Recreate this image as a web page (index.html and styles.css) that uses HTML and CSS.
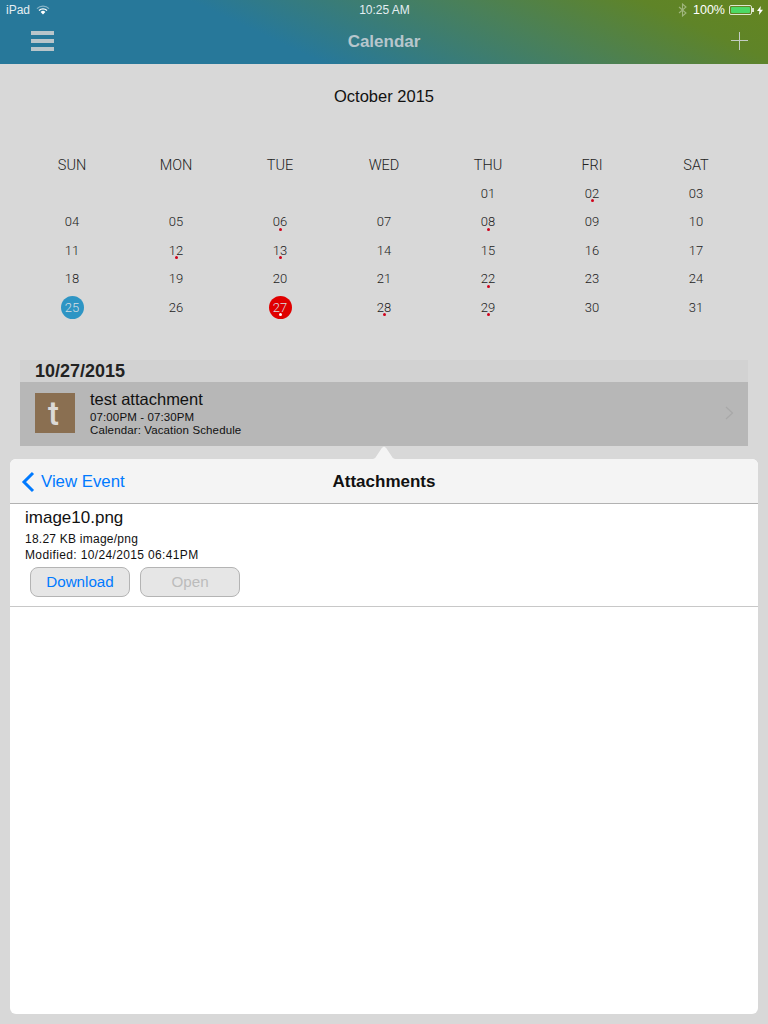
FILE: index.html
```html
<!DOCTYPE html>
<html lang="en">
<head>
    <meta charset="UTF-8">
    <title>Calendar</title>
    <link rel="stylesheet" href="styles.css">
</head>
<body>
    <header class="top-bar">
        <div class="status-bar">
            <div class="status-left">
                <span>iPad</span>
                <svg class="wifi-icon" width="14" height="10" viewBox="0 0 14 10">
                    <path d="M1 3.6a8.6 8.6 0 0 1 12 0" fill="none" stroke="#fff" stroke-opacity=".45" stroke-width="1.300"/>
                    <path d="M3 5.500a5.600 5.600 0 0 1 8 0" fill="none" stroke="#fff" stroke-width="1.300"/>
                    <path d="M4.600 7 7 9.600 9.400 7a3.400 3.400 0 0 0-4.800 0z" fill="#fff"/>
                </svg>
            </div>
            <div class="status-time">10:25 AM</div>
            <div class="status-right">
                <svg class="bt-icon" width="9" height="14" viewBox="0 0 9 14">
                    <path d="M1 4l7 6-3.500 3V1L8 4l-7 6" fill="none" stroke="#fff" stroke-opacity=".4" stroke-width="1.100"/>
                </svg>
                <span class="battery-text">100%</span>
                <div class="battery"><div class="battery-fill"></div></div>
                <div class="battery-nub"></div>
                <svg class="bolt-icon" width="6" height="9" viewBox="0 0 6 9"><path d="M3.800 0 0 5h2.400L1.900 9 6 3.800H3.400z" fill="#fff"/></svg>
            </div>
        </div>
        <nav class="nav-bar">
            <div class="menu-icon"><span></span><span></span><span></span></div>
            <div class="nav-title">Calendar</div>
            <svg class="plus-icon" width="18" height="18" viewBox="0 0 18 18">
                <path d="M9.500 0v18M1 8.500h17" stroke="#c4cdc4" stroke-width="1"/>
            </svg>
        </nav>
    </header>

    <section class="calendar">
        <h2 class="month-title">October 2015</h2>
        <div class="week-head">
            <div>SUN</div><div>MON</div><div>TUE</div><div>WED</div><div>THU</div><div>FRI</div><div>SAT</div>
        </div>
        <div class="month-grid">
            <div></div><div></div><div></div><div></div>
            <div class="day">01</div>
            <div class="day has-event">02</div>
            <div class="day">03</div>
            <div class="day">04</div>
            <div class="day">05</div>
            <div class="day has-event">06</div>
            <div class="day">07</div>
            <div class="day has-event">08</div>
            <div class="day">09</div>
            <div class="day">10</div>
            <div class="day">11</div>
            <div class="day has-event">12</div>
            <div class="day has-event">13</div>
            <div class="day">14</div>
            <div class="day">15</div>
            <div class="day">16</div>
            <div class="day">17</div>
            <div class="day">18</div>
            <div class="day">19</div>
            <div class="day">20</div>
            <div class="day">21</div>
            <div class="day has-event">22</div>
            <div class="day">23</div>
            <div class="day">24</div>
            <div class="day today">25</div>
            <div class="day">26</div>
            <div class="day selected has-event">27</div>
            <div class="day has-event">28</div>
            <div class="day has-event">29</div>
            <div class="day">30</div>
            <div class="day">31</div>
        </div>
    </section>

    <section class="agenda">
        <div class="agenda-date">10/27/2015</div>
        <div class="event-row">
            <div class="event-thumb">t</div>
            <div class="event-info">
                <div class="event-name">test attachment</div>
                <div class="event-meta">07:00PM - 07:30PM</div>
                <div class="event-meta">Calendar: Vacation Schedule</div>
            </div>
            <svg class="event-chevron" width="9" height="14" viewBox="0 0 9 14">
                <path d="M1 1l6.500 6L1 13" fill="none" stroke="#a8a8a8" stroke-width="1.200"/>
            </svg>
        </div>
    </section>

    <section class="popover">
        <div class="popover-arrow"></div>
        <div class="popover-head">
            <div class="back-link">
                <svg width="14" height="22" viewBox="0 0 14 22">
                    <path d="M12 2 3 11l9 9" fill="none" stroke="#007aff" stroke-width="3"/>
                </svg>
                <span>View Event</span>
            </div>
            <div class="popover-title">Attachments</div>
        </div>
        <div class="attachment">
            <div class="file-name">image10.png</div>
            <div class="file-meta">18.27 KB image/png</div>
            <div class="file-meta">Modified: 10/24/2015 06:41PM</div>
            <div class="file-actions">
                <button class="file-btn">Download</button>
                <button class="file-btn" disabled>Open</button>
            </div>
        </div>
    </section>
</body>
</html>
```

FILE: styles.css
```css
* {
    box-sizing: border-box;
}
body {
    font-family: "Liberation Sans", Arial, sans-serif;
    margin: 0;
    width: 768px;
    height: 1024px;
    overflow: hidden;
    background-color: #d8d8d8;
    color: #222;
}

/* status bar + nav */
.top-bar {
    height: 64px;
    background: linear-gradient(25deg, #27789a 0%, #27789a 36%, #4a8058 66%, #5f8428 86%, #648520 100%);
    color: #fff;
}
.status-bar {
    height: 20px;
    padding: 0 5px 0 6px;
    display: grid;
    grid-template-columns: 1fr auto 1fr;
    align-items: center;
    font-size: 12px;
}
.status-left {
    display: flex;
    align-items: center;
    gap: 6px;
    color: #e4eef2;
}
.status-time {
    color: #e4eef2;
}
.status-right {
    display: flex;
    align-items: center;
    justify-content: flex-end;
    font-size: 12.500px;
}
.battery-text {
    margin-left: 6px;
    margin-right: 4px;
}
.battery {
    width: 23px;
    height: 10px;
    border: 1px solid #dfe6cf;
    border-radius: 2px;
    padding: 1px;
}
.battery-fill {
    height: 100%;
    background-color: #4cd964;
    border-radius: 1px;
}
.battery-nub {
    width: 2px;
    height: 4px;
    background-color: #dfe6cf;
}
.bolt-icon {
    margin-left: 3px;
}
.nav-bar {
    height: 44px;
    padding: 0 20px 0 31px;
    display: flex;
    align-items: center;
    justify-content: space-between;
    position: relative;
}
.menu-icon {
    width: 23px;
    margin-bottom: 2px;
    display: flex;
    flex-direction: column;
    gap: 4px;
}
.menu-icon span {
    height: 4px;
    background-color: #b9c5ca;
}
.nav-title {
    position: absolute;
    left: 0;
    right: 0;
    text-align: center;
    font-size: 17px;
    font-weight: bold;
    color: #b7c6cc;
}
.plus-icon {
    display: block;
    margin-bottom: 2px;
}

/* calendar */
.calendar {
    padding: 0 20px;
}
.month-title {
    margin: 0;
    padding-top: 23px;
    height: 85px;
    text-align: center;
    font-size: 16.500px;
    line-height: 18px;
    font-weight: normal;
    color: #111;
}
.week-head {
    display: grid;
    grid-template-columns: repeat(7, 104px);
    height: 30px;
    text-align: center;
    font-family: Roboto, sans-serif;
    font-weight: 300;
    font-size: 14.500px;
    line-height: 34px;
    color: #222;
}
.month-grid {
    display: grid;
    grid-template-columns: repeat(7, 104px);
    grid-auto-rows: 28.500px;
    text-align: center;
    font-family: Roboto, sans-serif;
    font-weight: 300;
    font-size: 13px;
    color: #222;
}
.day {
    position: relative;
    display: flex;
    align-items: center;
    justify-content: center;
    isolation: isolate;
}
.has-event::after {
    content: "";
    position: absolute;
    left: 50%;
    top: 20px;
    width: 3px;
    height: 3px;
    margin-left: -1.500px;
    background-color: #d0021b;
    border-radius: 50%;
}
.today::before,
.selected::before {
    content: "";
    position: absolute;
    left: 40.500px;
    top: 3px;
    width: 23px;
    height: 23px;
    border-radius: 50%;
    z-index: -1;
}
.today,
.selected {
    color: #d7dfe2;
}
.today::before {
    background-color: #2e95c4;
}
.selected::before {
    background-color: #e00000;
}
.selected.has-event::after {
    background-color: #fff;
}

/* selected day list */
.agenda {
    margin: 38.500px 20px 0;
}
.agenda-date {
    height: 22px;
    padding-left: 15px;
    background-color: #d2d2d2;
    font-size: 18px;
    font-weight: bold;
    line-height: 23px;
    color: #222;
}
.event-row {
    height: 64px;
    padding: 11px 15px;
    display: flex;
    align-items: flex-start;
    background-color: #b7b7b7;
}
.event-thumb {
    width: 40px;
    height: 40px;
    padding-right: 3px;
    background-color: #8a6f51;
    color: #dcd9d6;
    font-family: Roboto, sans-serif;
    font-weight: 500;
    font-size: 33px;
    line-height: 42px;
    text-align: center;
}
.event-info {
    margin: -1px 0 0 15px;
    flex: 1;
    color: #111;
}
.event-name {
    font-size: 16.500px;
    line-height: 14px;
    padding: 0 0 5px;
}
.event-meta {
    font-size: 11.500px;
    letter-spacing: .12px;
    line-height: 13px;
}
.event-chevron {
    margin: 13px -1px 0 0;
}

/* attachments popover */
.popover {
    position: relative;
    margin: 13px 10px 0;
    height: 555px;
    background-color: #fff;
    border-radius: 6px;
}
.popover-arrow {
    position: absolute;
    left: 363px;
    top: -13px;
    width: 22px;
    height: 13px;
    background-color: #f4f4f4;
    clip-path: polygon(0 100%, 10% 92%, 40% 15%, 50% 4%, 60% 15%, 90% 92%, 100% 100%);
}
.popover-head {
    position: relative;
    height: 45px;
    padding-top: 2px;
    display: flex;
    align-items: center;
    justify-content: center;
    background-color: #f4f4f4;
    border-bottom: 1px solid #b2b2b2;
    border-radius: 6px 6px 0 0;
}
.back-link {
    position: absolute;
    left: 11px;
    top: 12px;
    display: flex;
    align-items: center;
    gap: 6px;
    font-size: 16.800px;
    color: #007aff;
}
.popover-title {
    font-size: 17px;
    font-weight: bold;
    color: #111;
}
.attachment {
    height: 103px;
    padding: 4px 15px 0;
    border-bottom: 1px solid #c8c8c8;
    color: #111;
}
.file-name {
    font-size: 17px;
    line-height: 20px;
    margin-bottom: 3px;
}
.file-meta {
    font-size: 12px;
    letter-spacing: .36px;
    line-height: 16px;
}
.file-name + .file-meta {
    letter-spacing: .24px;
}
.file-meta + .file-meta {
    margin-bottom: 4px;
}
.file-actions {
    display: flex;
    gap: 10px;
    margin: 0 0 0 5px;
}
.file-btn {
    width: 100px;
    height: 30px;
    padding: 0 0 2px;
    font-family: inherit;
    font-size: 15.200px;
    color: #007aff;
    background-color: #e6e6e6;
    border: 1px solid #b4b4b4;
    border-radius: 8px;
}
.file-btn:disabled {
    color: #bcbcbc;
}
```
